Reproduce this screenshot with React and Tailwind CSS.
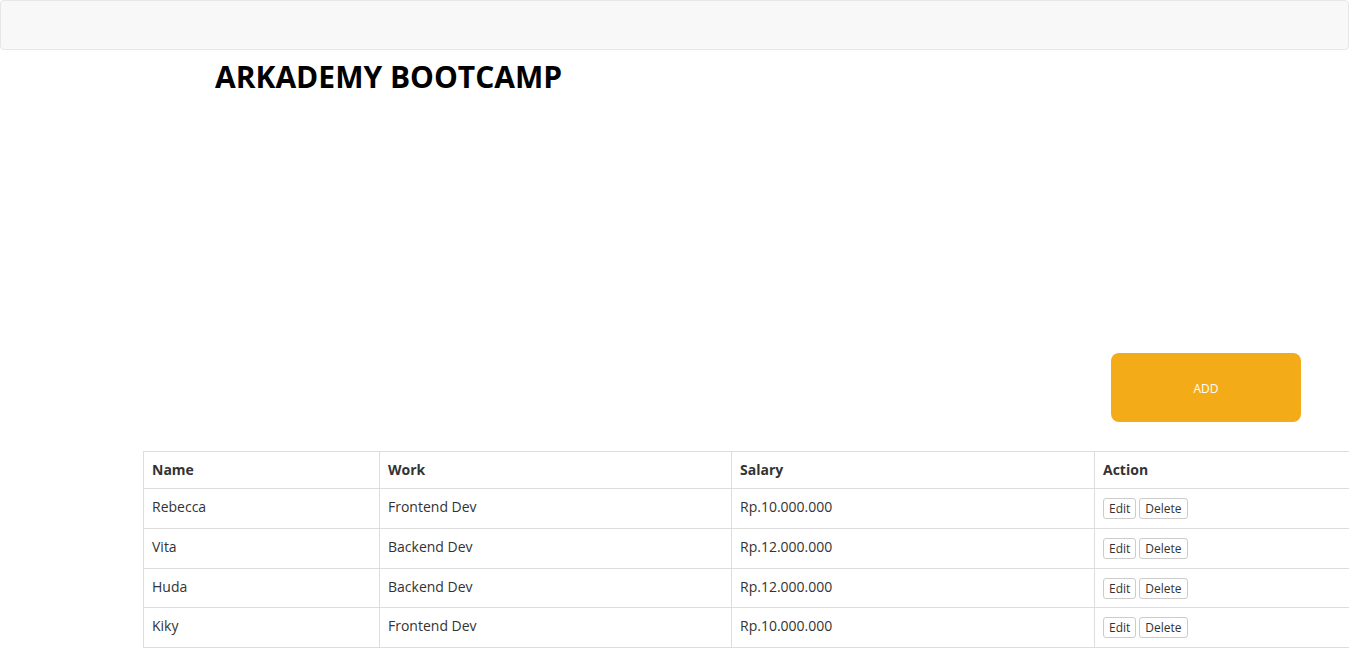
const rows = [
  { name: 'Rebecca', work: 'Frontend Dev', salary: 'Rp.10.000.000' },
  { name: 'Vita', work: 'Backend Dev', salary: 'Rp.12.000.000' },
  { name: 'Huda', work: 'Backend Dev', salary: 'Rp.12.000.000' },
  { name: 'Kiky', work: 'Frontend Dev', salary: 'Rp.10.000.000' },
];

export default function App() {
  return (
    <div className="w-[1349px] h-[652px] overflow-hidden bg-white text-[#333] font-['Open_Sans',sans-serif]">
      <nav className="h-[50px] bg-[#f8f8f8] border border-[#e7e7e7] rounded-[4px]" />

      <h1 className="ml-[215px] mt-[10px] text-[30px] leading-[33px] font-bold text-black">ARKADEMY BOOTCAMP</h1>

      <div className="flex justify-end pr-[48px] mt-[260px]">
        <button className="w-[190px] h-[69px] rounded-[8px] bg-[#f3ab17] text-white text-[12px] leading-[17px] pt-[2px]">ADD</button>
      </div>

      <table className="ml-[143px] mt-[29px] w-[1240px] border-collapse text-[14px] leading-[20px] table-fixed">
        <thead>
          <tr>
            <th className="w-[236px] border border-[#ddd] p-[8px] text-left font-bold align-top">Name</th>
            <th className="w-[352px] border border-[#ddd] p-[8px] text-left font-bold align-top">Work</th>
            <th className="w-[363px] border border-[#ddd] p-[8px] text-left font-bold align-top">Salary</th>
            <th className="border border-[#ddd] p-[8px] text-left font-bold align-top">Action</th>
          </tr>
        </thead>
        <tbody>
          {rows.map((r, i) => (
            <tr key={i}>
              <td className="border border-[#ddd] p-[8px] align-top">{r.name}</td>
              <td className="border border-[#ddd] p-[8px] align-top">{r.work}</td>
              <td className="border border-[#ddd] p-[8px] align-top">{r.salary}</td>
              <td className="border border-[#ddd] p-[8px] align-top">
                <div className="flex gap-[3px] mt-[1px] h-[21.75px]">
                  <button className="h-[21px] px-[5px] border border-[#ccc] rounded-[3px] bg-white text-[12px] leading-[19px] text-[#333]">Edit</button>
                  <button className="h-[21px] px-[5px] border border-[#ccc] rounded-[3px] bg-white text-[12px] leading-[19px] text-[#333]">Delete</button>
                </div>
              </td>
            </tr>
          ))}
        </tbody>
      </table>
    </div>
  );
}
